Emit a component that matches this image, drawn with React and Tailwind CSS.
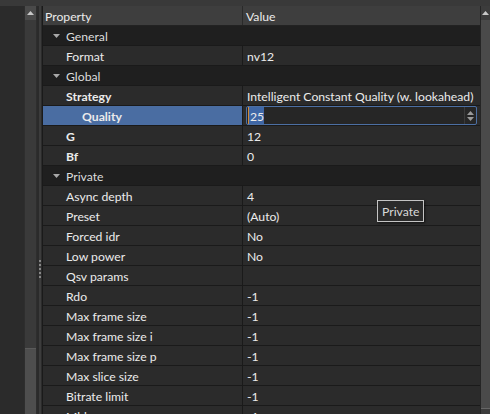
import React from "react";

const rows = [
    { type: "group", name: "General" },
    { name: "Format", value: "nv12" },
    { type: "group", name: "Global" },
    { name: "Strategy", value: "Intelligent Constant Quality (w. lookahead)", bold: true },
    { name: "Quality", value: "25", bold: true, nested: true, editing: true },
    { name: "G", value: "12", bold: true },
    { name: "Bf", value: "0", bold: true },
    { type: "group", name: "Private" },
    { name: "Async depth", value: "4" },
    { name: "Preset", value: "(Auto)" },
    { name: "Forced idr", value: "No" },
    { name: "Low power", value: "No" },
    { name: "Qsv params", value: "" },
    { name: "Rdo", value: "-1" },
    { name: "Max frame size", value: "-1" },
    { name: "Max frame size i", value: "-1" },
    { name: "Max frame size p", value: "-1" },
    { name: "Max slice size", value: "-1" },
    { name: "Bitrate limit", value: "-1" },
    { name: "Mbbrc", value: "-1" },
];

function Row({ row }) {
    if (row.type === "group") {
        return (
            <div className="flex items-center h-[20px] shrink-0 bg-[#1f1f1f] border-b border-[#1a1a1a]">
                <span className="w-[23px] flex justify-center pl-[3px]">
                    <svg width="7" height="4" viewBox="0 0 7 4">
                        <path d="M0 0 L7 0 L3.5 4 Z" fill="#a8a8a8" />
                    </svg>
                </span>
                <span className="text-[#dcdcdc] pt-[4px]">{row.name}</span>
            </div>
        );
    }
    return (
        <div className="flex h-[20px] shrink-0 border-b border-[#1a1a1a]">
            <div
                className={`w-[200px] shrink-0 flex items-center pt-[4px] border-r border-[#1a1a1a] ${
                    row.nested ? "pl-[39px]" : "pl-[23px]"
                } ${row.editing ? "bg-[#4a6da2]" : ""} ${row.bold ? "font-bold" : ""}`}
            >
                {row.name}
            </div>
            {row.editing ? (
                <div className="flex-1 flex items-center pl-[3px] pr-[3px]">
                    <div className="flex-1 h-[19px] flex items-center border border-[#4c6fa3] bg-[#262626] rounded-[2px]">
                        <span className="ml-[1px] pl-[1px] bg-[#3f67a6] leading-[15px] pt-[2px] border-l border-[#d08a3a]">25</span>
                        <span className="ml-auto w-[12px] h-full flex flex-col items-center justify-center gap-[2px] border-l border-[#3a3a3a]">
                            <svg width="7" height="4" viewBox="0 0 7 4">
                                <path d="M0 4 L7 4 L3.5 0 Z" fill="#9a9a9a" />
                            </svg>
                            <svg width="7" height="4" viewBox="0 0 7 4">
                                <path d="M0 0 L7 0 L3.5 4 Z" fill="#9a9a9a" />
                            </svg>
                        </span>
                    </div>
                </div>
            ) : (
                <div className="flex-1 flex items-center pl-[4px] pt-[4px] whitespace-nowrap overflow-hidden">{row.value}</div>
            )}
        </div>
    );
}

export default function App() {
    return (
        <div
            className="relative w-[490px] h-[414px] overflow-hidden bg-[#2b2b2b] flex flex-col text-[12.2px] text-[#ebebeb]"
            style={{ fontFamily: "Lato, 'Noto Sans', sans-serif" }}
        >
            <div className="h-[6px] shrink-0 bg-[#393939]" />
            <div className="flex flex-1 min-h-0">
                {/* left dock area */}
                <div className="w-[24px] shrink-0 bg-[#2b2b2b]" />
                <div className="w-[13px] shrink-0 flex flex-col bg-[#3a3a3a] border-x border-[#2e2e2e]">
                    <div className="h-[14px] shrink-0 bg-[#4a4a4a] flex items-center justify-center">
                        <svg width="7" height="4" viewBox="0 0 7 4">
                            <path d="M0 4 L7 4 L3.5 0 Z" fill="#c8c8c8" />
                        </svg>
                    </div>
                    <div className="flex-1" />
                    <div className="h-[66px] shrink-0 bg-[#4e4e4e] border-t border-[#5a5a5a]" />
                </div>
                <div className="w-[5px] shrink-0 flex bg-[#2b2b2b]">
                    <div className="ml-[2px] w-[2px] bg-[#3c3c3c] flex flex-col items-center pt-[254px] gap-[2px]">
                        <div className="w-[2px] h-[2px] bg-[#888]" />
                        <div className="w-[2px] h-[2px] bg-[#888]" />
                        <div className="w-[2px] h-[2px] bg-[#888]" />
                        <div className="w-[2px] h-[2px] bg-[#888]" />
                        <div className="w-[2px] h-[2px] bg-[#888]" />
                    </div>
                </div>

                {/* property grid */}
                <div className="flex-1 flex min-w-0 border-l border-[#1a1a1a] bg-[#2b2b2b]">
                    <div className="flex-1 flex flex-col min-w-0">
                        <div className="flex h-[20px] shrink-0 bg-[#3e3e3e] border-b border-[#222]">
                            <div className="w-[200px] shrink-0 pl-[2px] pt-[4px] flex items-center border-r border-[#2a2a2a]">Property</div>
                            <div className="flex-1 pl-[3px] pt-[4px] flex items-center">Value</div>
                        </div>
                        {rows.map((row, i) => (
                            <Row key={i} row={row} />
                        ))}
                    </div>
                    <div className="w-[10px] shrink-0 flex flex-col bg-[#3a3a3a] border-l border-[#252525]">
                        <div className="h-[14px] shrink-0 bg-[#3c3c3c] flex items-center justify-center">
                            <svg width="7" height="4" viewBox="0 0 7 4">
                                <path d="M0 4 L7 4 L3.5 0 Z" fill="#c8c8c8" />
                            </svg>
                        </div>
                        <div className="flex-1 bg-[#4a4a4a]" />
                        <div className="h-[6px] shrink-0 bg-[#3c3c3c] border-t border-[#666]" />
                    </div>
                </div>
            </div>

            {/* tooltip */}
            <div className="absolute left-[377px] top-[200px] h-[22px] px-[4px] pt-[2px] flex items-center border border-[#c4c4c4] bg-[#2b2b2b] text-[#d8d8d8] shadow-[1px_1px_2px_rgba(0,0,0,0.6)]">
                Private
            </div>
        </div>
    );
}
